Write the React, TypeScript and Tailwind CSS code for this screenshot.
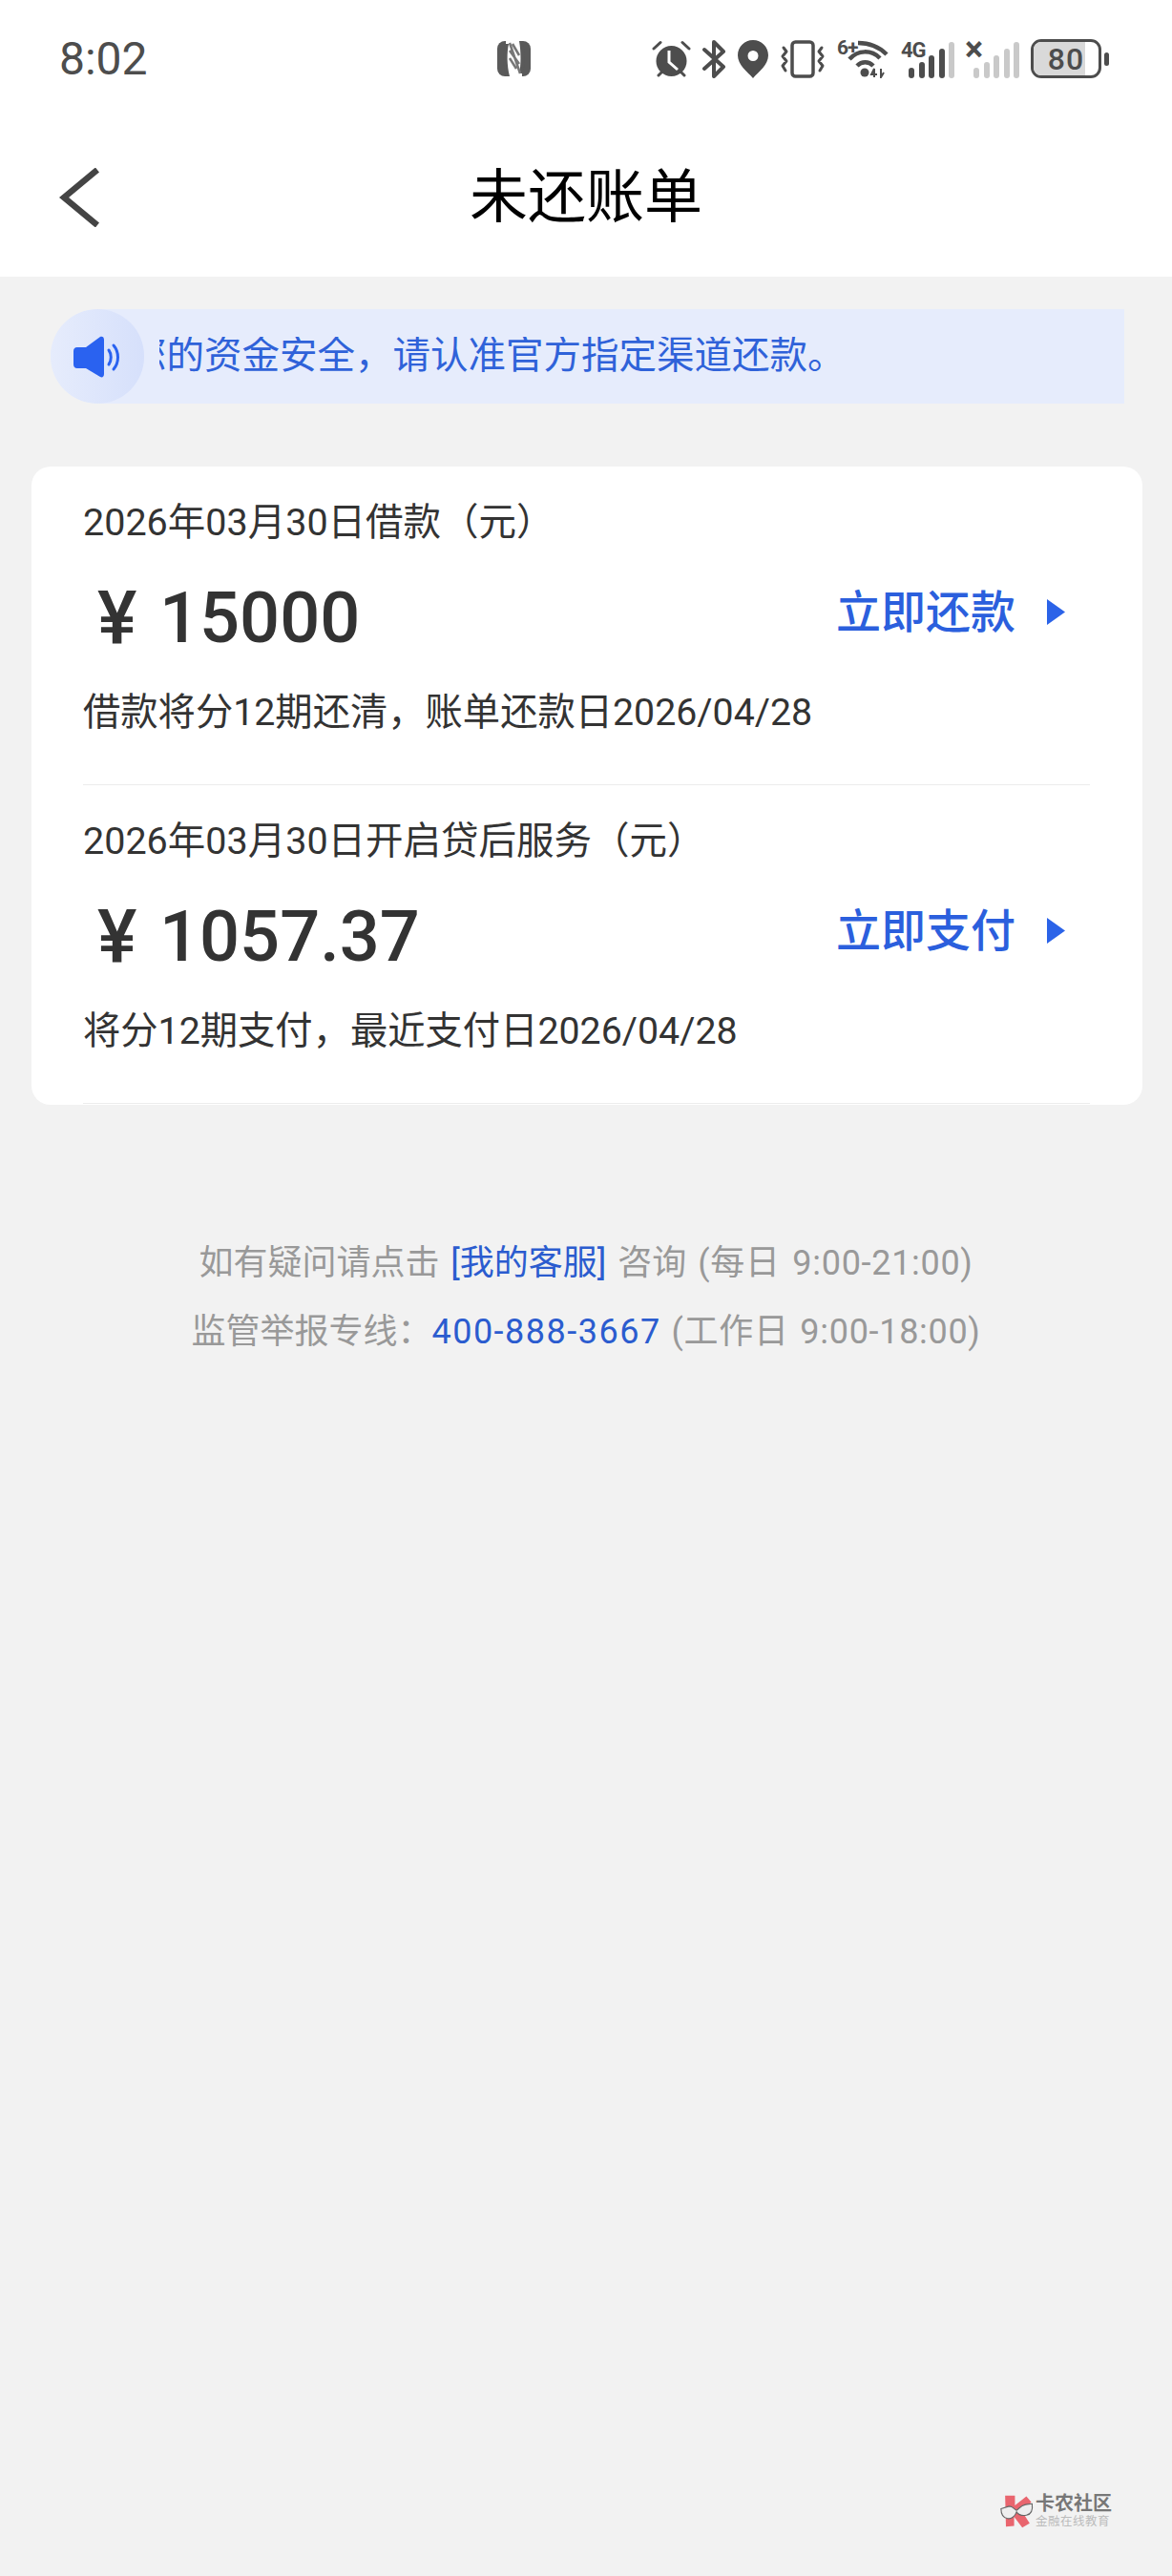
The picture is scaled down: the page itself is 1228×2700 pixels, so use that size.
import React from "react";

const Alarm = () => (
  <svg width="41" height="40" viewBox="0 0 41 40" fill="#4d4d4d">
    <circle cx="20.5" cy="22" r="16" />
    <path d="M2 9 L9 2.5 M39 9 L32 2.5 M7 37 L11 33 M34 37 L30 33" stroke="#4d4d4d" strokeWidth="3" strokeLinecap="round" />
    <path d="M18 11 V23 L27 31" stroke="#fff" strokeWidth="3" fill="none" />
  </svg>
);
const Bluetooth = () => (
  <svg width="25" height="40" viewBox="0 0 25 40" fill="none" stroke="#4d4d4d" strokeWidth="4" strokeLinejoin="round" strokeLinecap="round">
    <path d="M2 10 L22 28 L12 38 V2 L22 12 L2 30" />
  </svg>
);
const Pin = () => (
  <svg width="32" height="40" viewBox="0 0 32 40" fill="#4d4d4d">
    <path fillRule="evenodd" d="M16 0 C7 0 0 7 0 16 C0 26 10 33 16 40 C22 33 32 26 32 16 C32 7 25 0 16 0 Z M16 11 A5.500 5.500 0 1 1 16 22 A5.500 5.500 0 1 1 16 11 Z" />
  </svg>
);
const Vibrate = () => (
  <svg width="48" height="40" viewBox="0 0 48 40" fill="none" stroke="#4d4d4d" strokeWidth="3.500" strokeLinecap="round" strokeLinejoin="round">
    <rect x="13" y="2" width="22" height="36" rx="3.500" />
    <path d="M4 8 L7 12 L3 17 L7 22 L3 27 L6 32 M44 8 L41 12 L45 17 L41 22 L45 27 L42 32" strokeWidth="3" />
  </svg>
);
const Wifi = () => (
  <div className="relative w-[55px] h-[40px]">
    <span className="absolute left-0 top-[-3px] text-[21px] leading-[22px] font-bold text-[#4d4d4d] tracking-[-1px]">6+</span>
    <svg className="absolute left-0 top-0" width="55" height="40" viewBox="0 0 55 40" fill="none" stroke="#4d4d4d" strokeWidth="4.500">
      <path d="M22 3 C33 3 44 7 52 15" />
      <path d="M13 20 C22 10 36 10 45 19" />
      <path d="M21 27 C26 22 33 22 38 27" />
      <circle cx="29" cy="34" r="4.500" fill="#4d4d4d" stroke="none" />
      <path d="M39 39 V30 L36 36 H42 M46 30 V39 L49 34" strokeWidth="2" />
    </svg>
  </div>
);
const Bars = ({ dark, label }: { dark: number; label: string }) => {
  const hs = [11, 17, 24, 31, 38];
  return (
    <div className="relative w-[56px] h-[40px]">
      <div className="absolute left-[8px] right-0 bottom-0 flex items-end justify-between">
        {hs.map((h, i) => (
          <div key={i} className={`w-[6px] rounded-full ${i < dark ? "bg-[#4d4d4d]" : "bg-[#c9c9c9]"}`} style={{ height: h }} />
        ))}
      </div>
      <span className={`absolute leading-[20px] font-bold text-[#4d4d4d] ${label === "4G" ? "top-[1px] left-0 text-[22px] tracking-[-1px]" : "top-[0px] left-[-1px] text-[36px]"}`}>{label}</span>
    </div>
  );
};
const Battery = () => (
  <div className="flex items-center gap-[3px]">
    <div className="relative w-[74px] h-[41px] rounded-[11px] border-[3px] border-[#4d4d4d] overflow-hidden flex items-center justify-center">
      <div className="absolute left-0 top-0 bottom-0 w-[80%] bg-[#d9d9d9]" />
      <span className="relative text-[32px] leading-none font-medium text-[#4d4d4d] font-['Roboto',sans-serif] tracking-[1px]">80</span>
    </div>
    <div className="w-[5px] h-[14px] rounded-full bg-[#4d4d4d]" />
  </div>
);
const Nfc = () => (
  <svg className="shrink-0" width="35" height="37" viewBox="0 0 35 37">
    <rect x="0" y="0" width="35" height="37" rx="8" fill="#5a5a5a" />
    <path d="M9 0 H26 V37 H9 Z" fill="#fff" />
    <path d="M8 3 C6 12 6 25 9 37 H13 C10 25 10 12 12 3 Z" fill="#5a5a5a" />
    <path d="M23 0 C25 12 25 25 23 34 H27 C29 25 29 12 27 0 Z" fill="#5a5a5a" />
    <path d="M13 2 L24 34 M13 10 L23 24 M13 18 L20 29 M16 3 L23 15" stroke="#777" strokeWidth="2.500" fill="none" />
  </svg>
);
const Speaker = () => (
  <svg width="52" height="44" viewBox="0 0 52 44">
    <path d="M5 12 H14 L29 1 C31 0 33 1 33 4 V40 C33 43 31 44 29 43 L14 34 H5 C2 34 1 32 1 30 V16 C1 14 2 12 5 12 Z" fill="#2a62f0" />
    <path d="M38 15 C41 19 41 26 38 30 M43 10 C49 17 49 28 43 35" fill="none" stroke="#2a62f0" strokeWidth="3" strokeLinecap="round" />
  </svg>
);
const Logo = () => (
  <svg width="36" height="36" viewBox="0 0 42 42">
    <path d="M6 2 H18 V14 L32 3 L38 10 L27 22 L36 36 L27 41 L17 28 V39 L7 40 Z" fill="#e9656e" />
    <path d="M1 18 L11 15 C16 15 17 19 20 20 C23 18 25 14 31 13 L39 12 C40 20 38 25 32 26 C26 27 22 25 20 22 C18 28 13 31 9 30 C3 29 1 25 1 18 Z" fill="#eee" stroke="#666" strokeWidth="1.300" />
  </svg>
);

function Row({ title, amount, action, note }: { title: string; amount: string; action: string; note: string }) {
  return (
    <div className="flex flex-col h-[334px] pt-[30px] border-b border-[#ececec] ml-[54px] mr-[55px]">
      <div className="h-[60px] leading-[60px] text-[39.500px] text-[#333] -mt-[1px]">{title}</div>
      <div className="h-[140px] flex items-center justify-between">
        <div className="flex items-center text-[#333] font-medium text-[74px] leading-none ml-[15px]">
          <span className="w-[65px] text-[78px]">¥</span>
          <span>{amount}</span>
        </div>
        <div className="flex items-center mr-[26px] mb-[13px] text-[#2b5fdd] text-[47px] leading-none font-medium">
          <span>{action}</span>
          <svg className="ml-[33px]" width="19" height="27" viewBox="0 0 19 27"><path d="M0 0 L19 13.500 L0 27 Z" fill="#2b63e8" /></svg>
        </div>
      </div>
      <div className="h-[58px] leading-[58px] text-[39.300px] text-[#333]">{note}</div>
    </div>
  );
}

export default function App() {
  return (
    <div className="w-[1228px] h-[2700px] bg-[#f2f2f2] relative overflow-hidden font-['Roboto','Noto_Sans_CJK_SC',sans-serif]">
      <div className="bg-white h-[290px]">
        <div className="h-[124px] flex items-center pl-[62px] pr-[66px] pb-[1px]">
          <span className="text-[48px] leading-none text-[#4d4d4d] w-[459px] shrink-0">8:02</span>
          <Nfc />
          <div className="flex items-center ml-[127px] gap-[12px] shrink-0">
            <Alarm />
            <Bluetooth />
            <Pin />
            <Vibrate />
            <Wifi />
            <Bars dark={4} label="4G" />
            <Bars dark={0} label="×" />
            <Battery />
          </div>
        </div>
        <div className="relative h-[166px] flex items-center justify-center">
          <svg className="absolute left-[62px] top-[52px]" width="42" height="62" viewBox="0 0 42 62" fill="none" stroke="#444" strokeWidth="6.500">
            <path d="M40 2 L5 31 L40 60" />
          </svg>
          <span className="text-[61px] leading-none text-black">未还账单</span>
        </div>
      </div>

      <div className="relative mt-[34px] ml-[53px] w-[1125px] h-[99px] bg-[#e6ecfc] rounded-l-full rounded-r-[12px] flex items-center overflow-hidden">
        <div className="w-[98px] h-[99px] rounded-full bg-gradient-to-r from-[#e6ecfc] to-[#d6e0fb] flex items-center justify-center shrink-0">
          <Speaker />
        </div>
        <div className="ml-[16px] overflow-hidden whitespace-nowrap text-[39.500px] leading-none text-[#2f62d9] pb-[2px]">
          <span className="block -ml-[32px]">您的资金安全，请认准官方指定渠道还款。</span>
        </div>
      </div>

      <div className="mt-[66px] ml-[33px] w-[1164px] h-[669px] bg-white rounded-[20px] overflow-hidden">
        <Row title="2026年03月30日借款（元）" amount="15000" action="立即还款" note="借款将分12期还清，账单还款日2026/04/28" />
        <Row title="2026年03月30日开启贷后服务（元）" amount="1057.37" action="立即支付" note="将分12期支付，最近支付日2026/04/28" />
      </div>

      <div className="mt-[130px] flex flex-col items-center text-[36px] leading-[72px] text-[#999]">
        <div className="[word-spacing:3px]">如有疑问请点击 <span className="text-[#2b5ccf]">[我的客服]</span> 咨询 <span className="tracking-[0.700px]">(每日 9:00-21:00)</span></div>
        <div className="[word-spacing:2px]">监管举报专线：<span className="text-[#2b5ccf] tracking-[1.500px]">400-888-3667</span> <span className="tracking-[0.700px]">(工作日 9:00-18:00)</span></div>
      </div>

      <div className="absolute left-[1048px] top-[2613px] flex items-center gap-[1px]">
        <Logo />
        <div className="flex flex-col">
          <span className="text-[20px] leading-[22px] font-bold text-[#777]">卡农社区</span>
          <span className="text-[12.500px] leading-[15px] tracking-[0.500px] text-[#bbb]">金融在线教育</span>
        </div>
      </div>
    </div>
  );
}
